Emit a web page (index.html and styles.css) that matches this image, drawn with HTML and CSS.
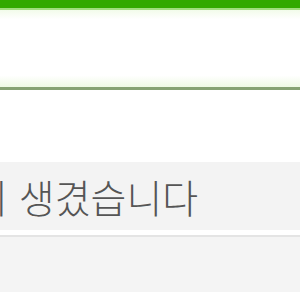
FILE: index.html
```html
<!DOCTYPE html>
<html lang="ko">
<head>
    <meta charset="UTF-8">
    <title>알림</title>
    <link rel="stylesheet" href="styles.css">
</head>
<body>
    <div class="topbar"></div>
    <div class="panel"></div>
    <div class="gap"></div>
    <div class="notice">
        <div class="notice-text">이 생겼습니다</div>
    </div>
    <div class="footer"></div>
</body>
</html>
```

FILE: styles.css
```css
* {
    margin: 0;
    padding: 0;
    box-sizing: border-box;
}

body {
    width: 300px;
    height: 300px;
    overflow: hidden;
    background: #ffffff;
    font-family: 'Noto Sans CJK KR', 'Noto Sans', sans-serif;
}

.topbar {
    height: 10px;
    background: #31a900;
    border-bottom: 2px solid #9fdc7e;
}

.panel {
    height: 80px;
    background: linear-gradient(#f2fbea, #ffffff 12%, #ffffff 85%, #eef9e4);
    border-bottom: 3px solid #86a274;
}

.gap {
    height: 72px;
    background: #ffffff;
}

.notice {
    height: 68px;
    background: #f3f3f3;
    overflow: hidden;
    display: flex;
    align-items: center;
}

.notice-text {
    margin-left: -28px;
    font-size: 39px;
    font-weight: 300;
    color: #555555;
    white-space: nowrap;
    line-height: 1;
}

.footer {
    height: 62px;
    background: #f4f4f4;
    border-top: 5px solid #ffffff;
    box-shadow: inset 0 2px 0 #e4e4e4;
}
```
